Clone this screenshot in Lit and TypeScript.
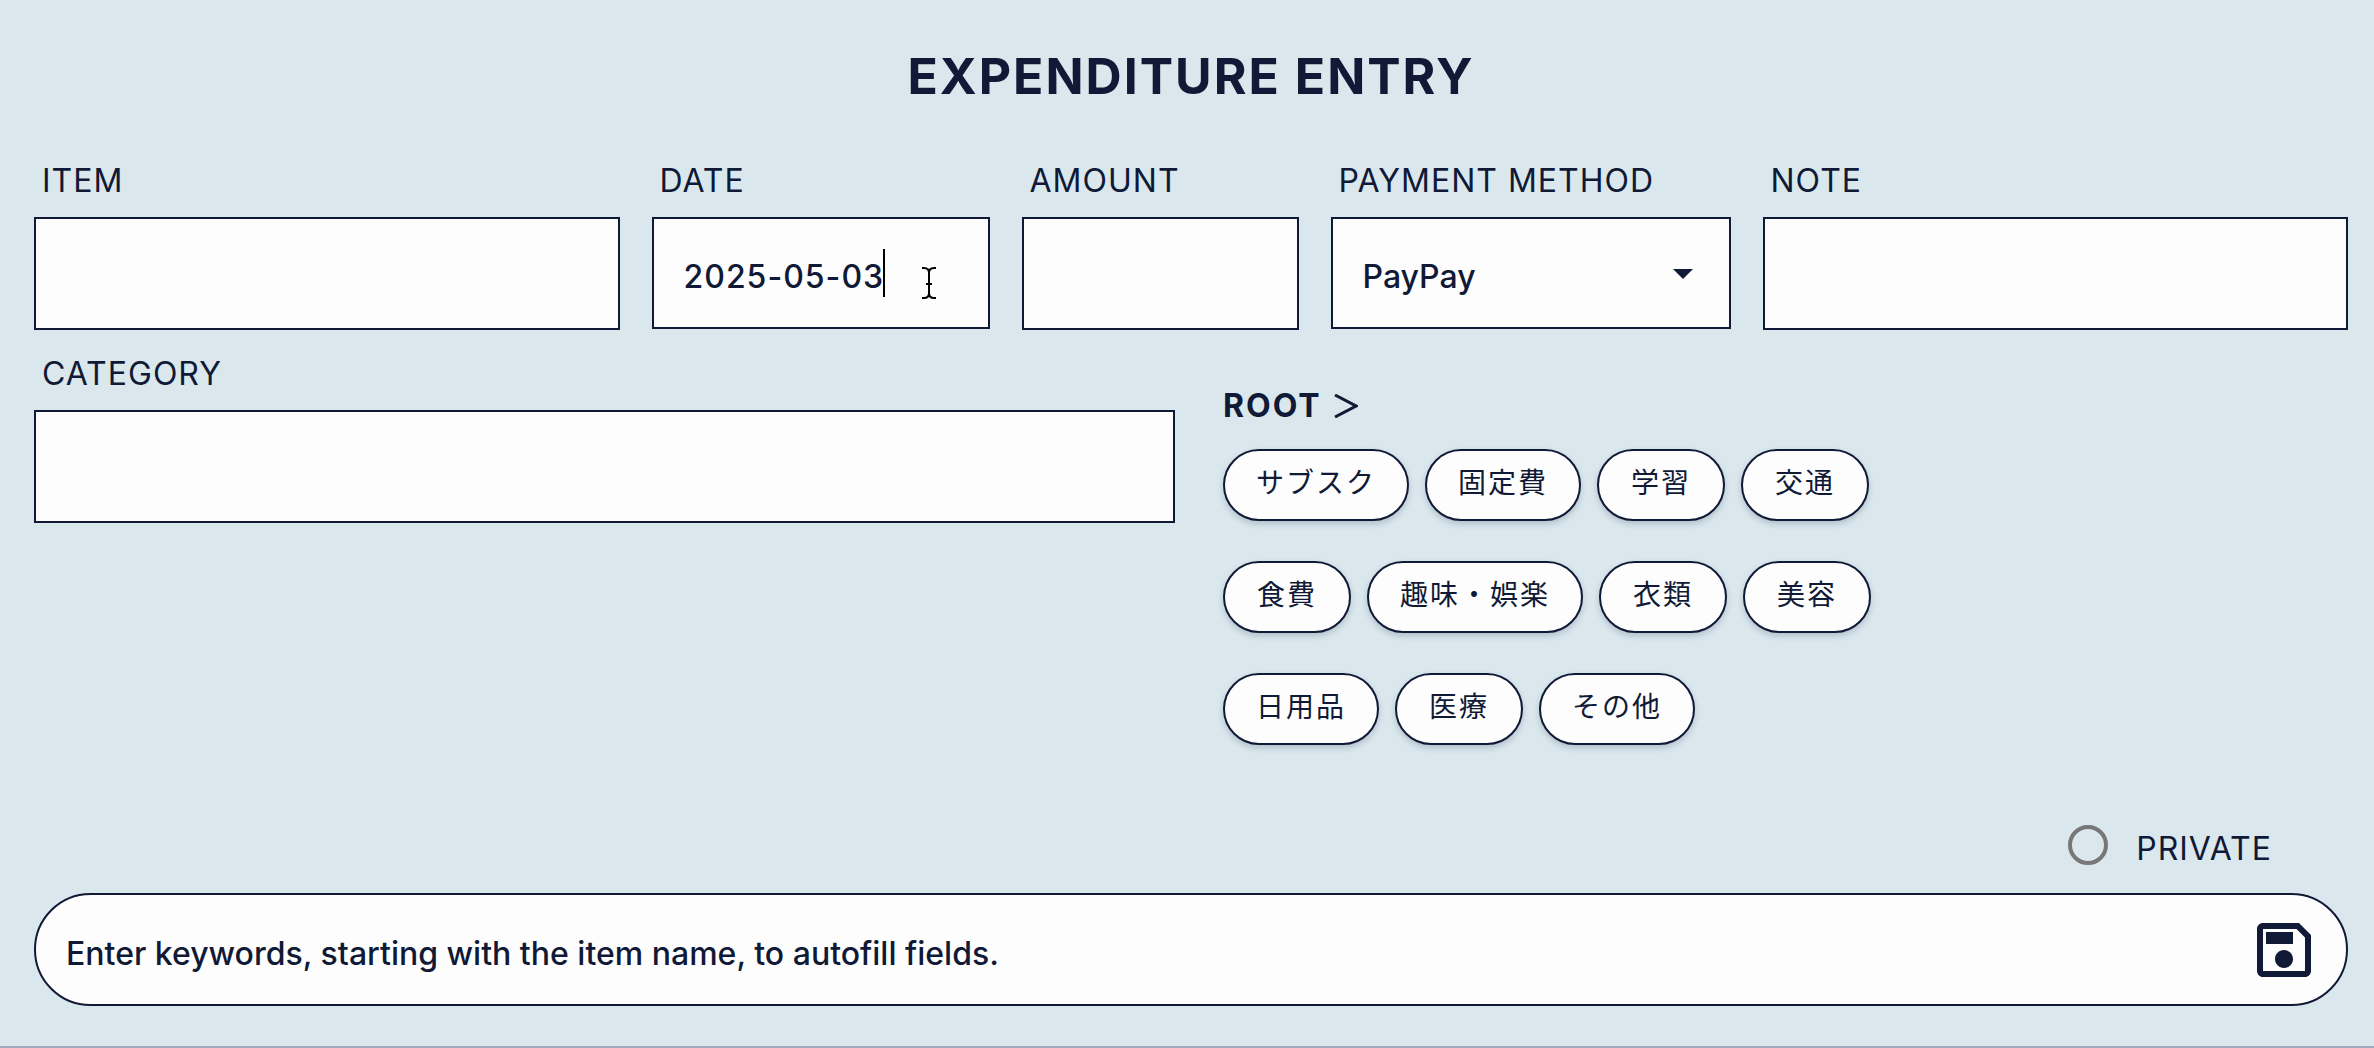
import { LitElement, html, css } from "lit";
import { customElement, state } from "lit/decorators.js";

const CATEGORY_ROWS = [
  ["サブスク", "固定費", "学習", "交通"],
  ["食費", "趣味・娯楽", "衣類", "美容"],
  ["日用品", "医療", "その他"],
];

@customElement("app-root")
export class AppRoot extends LitElement {
  static styles = css`
    :host {
      display: block;
      --ink: #101935;
      --paper: #fdfdfd;
      --sky: #dae8ee;
      font-family: Inter, "Noto Sans CJK JP", sans-serif;
      font-size: 32px;
      line-height: 48px;
      letter-spacing: 1px;
      color: var(--ink);
    }
    * {
      box-sizing: border-box;
    }
    .page {
      display: flex;
      flex-direction: column;
      min-height: 100vh;
      padding: 36px 26px 39px 34px;
      background: var(--sky);
      border-bottom: 2px solid #a2a8bc;
    }
    .title {
      margin: 0 0 41px;
      font-size: 50px;
      line-height: 80px;
      font-weight: 700;
      letter-spacing: 2px;
      text-align: center;
    }
    .fields {
      display: grid;
      grid-template-columns: 1fr 338px 277px 400px 1fr;
      column-gap: 32px;
    }
    .field {
      display: flex;
      flex-direction: column;
      min-width: 0;
    }
    .label {
      padding: 0 8px;
      margin-bottom: 12px;
    }
    .box {
      display: block;
      width: 100%;
      height: 113px;
      margin: 0;
      padding: 7px 30px 0;
      border: 2px solid var(--ink);
      border-radius: 0;
      background: var(--paper);
      font: inherit;
      font-weight: 500;
      letter-spacing: inherit;
      color: inherit;
      outline: none;
      appearance: none;
    }
    .control {
      position: relative;
    }
    .control .box {
      height: 112px;
    }
    .select {
      letter-spacing: 0;
    }
    .caret {
      position: absolute;
      left: 231px;
      top: 32px;
      width: 2px;
      height: 48px;
      background: #000;
    }
    .pointer {
      position: absolute;
      left: 270px;
      top: 50px;
      width: 14px;
      height: 32px;
    }
    .arrow {
      position: absolute;
      right: 38px;
      top: 52px;
      width: 20px;
      height: 10px;
      fill: var(--ink);
      pointer-events: none;
    }
    .middle {
      display: grid;
      grid-template-columns: 1141fr 1125fr;
      column-gap: 48px;
      margin-top: 20px;
    }
    .browser {
      padding-top: 32px;
    }
    .path {
      display: flex;
      align-items: center;
      gap: 12px;
      margin-bottom: 19px;
    }
    .crumb {
      padding: 0;
      border: 0;
      background: none;
      font: inherit;
      font-weight: 700;
      letter-spacing: 2px;
      color: inherit;
    }
    .chevron {
      width: 24px;
      height: 24px;
    }
    .rows {
      display: flex;
      flex-direction: column;
      gap: 40px;
    }
    .row {
      display: flex;
      gap: 16px;
    }
    .chip {
      min-width: 128px;
      height: 72px;
      padding: 0 31px 4px;
      border: 2px solid var(--ink);
      border-radius: 36px;
      background: var(--paper);
      box-shadow: 0 3px 6px rgba(16, 25, 53, 0.2);
      font: inherit;
      font-size: 28px;
      line-height: 40px;
      letter-spacing: 2px;
      color: inherit;
    }
    .private {
      display: flex;
      align-items: center;
      align-self: flex-end;
      gap: 28px;
      margin: 72px 76px 20px 0;
    }
    .private-text {
      padding-top: 8px;
    }
    .tick {
      width: 40px;
      height: 40px;
      margin: 0;
      border: 4px solid #777;
      border-radius: 50%;
      appearance: none;
    }
    .tick:checked {
      background: var(--ink);
    }
    .search {
      display: flex;
      align-items: center;
      height: 113px;
      padding: 0 26px 0 30px;
      border: 2px solid var(--ink);
      border-radius: 57px;
      background: var(--paper);
    }
    .keywords {
      flex: 1;
      min-width: 0;
      height: 100%;
      padding: 8px 0 0;
      border: 0;
      background: none;
      font: inherit;
      font-weight: 500;
      letter-spacing: 0;
      color: inherit;
      outline: none;
    }
    .keywords::placeholder {
      color: inherit;
      opacity: 1;
    }
    .save {
      width: 72px;
      height: 72px;
      padding: 0;
      border: 0;
      background: none;
    }
    .icon {
      display: block;
      width: 72px;
      height: 72px;
      fill: var(--ink);
    }
  `;

  @state() private category = "";

  render() {
    return html`
      <main class="page">
        <h1 class="title">EXPENDITURE ENTRY</h1>
        <section class="fields">
          <div class="field">
            <label class="label" for="item">ITEM</label>
            <input class="box" id="item" type="text" />
          </div>
          <div class="field">
            <label class="label" for="date">DATE</label>
            <div class="control">
              <input class="box" id="date" type="text" value="2025-05-03" />
              <span class="caret"></span>
              <svg class="pointer" viewBox="0 0 14 32" fill="none" stroke="#000" stroke-width="2">
                <path d="M0 1h2q5 0 5 5v20q0 5-5 5H0M14 1h-2q-5 0-5 5M7 26q0 5 5 5h2M4 17h6" />
              </svg>
            </div>
          </div>
          <div class="field">
            <label class="label" for="amount">AMOUNT</label>
            <input class="box" id="amount" type="text" inputmode="numeric" />
          </div>
          <div class="field">
            <label class="label" for="payment">PAYMENT METHOD</label>
            <div class="control">
              <select class="box select" id="payment">
                <option>PayPay</option>
              </select>
              <svg class="arrow" viewBox="0 0 20 10"><path d="M0 0h20L10 10z" /></svg>
            </div>
          </div>
          <div class="field">
            <label class="label" for="note">NOTE</label>
            <input class="box" id="note" type="text" />
          </div>
        </section>
        <section class="middle">
          <div class="field">
            <label class="label" for="category">CATEGORY</label>
            <input class="box" id="category" type="text" .value=${this.category} />
          </div>
          <div class="browser">
            <div class="path">
              <button class="crumb" type="button" @click=${() => (this.category = "")}>ROOT</button>
              <svg class="chevron" viewBox="0 0 24 24" fill="none" stroke="#101935" stroke-width="3">
                <path d="M1 1l21 11L1 23" />
              </svg>
            </div>
            <div class="rows">
              ${CATEGORY_ROWS.map(
                (row) => html`<div class="row">
                  ${row.map(
                    (name) => html`<button class="chip" type="button" @click=${() => (this.category = name)}>${name}</button>`,
                  )}
                </div>`,
              )}
            </div>
          </div>
        </section>
        <label class="private">
          <input class="tick" type="checkbox" />
          <span class="private-text">PRIVATE</span>
        </label>
        <div class="search">
          <input
            class="keywords"
            type="text"
            aria-label="Keywords"
            placeholder="Enter keywords, starting with the item name, to autofill fields."
          />
          <button class="save" type="button" aria-label="Save">
            <svg class="icon" viewBox="0 0 24 24">
              <path
                d="M17 3H5c-1.11 0-2 .9-2 2v14c0 1.1.89 2 2 2h14c1.1 0 2-.9 2-2V7l-4-4zm2 16H5V5h11.17L19 7.83V19zm-7-7c-1.66 0-3 1.34-3 3s1.34 3 3 3 3-1.34 3-3-1.34-3-3-3zM6 6h9v4H6z"
              />
            </svg>
          </button>
        </div>
      </main>
    `;
  }
}
